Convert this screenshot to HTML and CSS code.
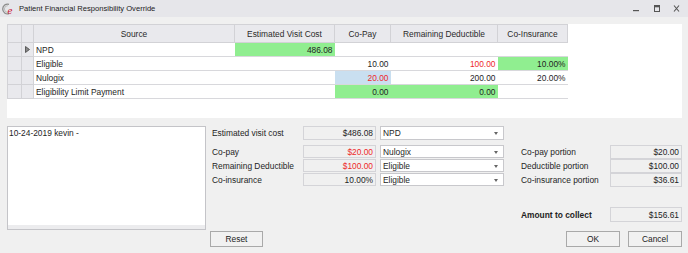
FILE: index.html
```html
<!DOCTYPE html>
<html>
<head>
<meta charset="utf-8">
<link rel="stylesheet" href="styles.css">
</head>
<body>
<div class="window">
  <div class="titlebar">
    <svg class="app-icon" width="14" height="12" viewBox="0 0 14 12">
      <path d="M7 1.3 A4.9 4.9 0 1 0 7 10.7" fill="none" stroke="#8c8c8c" stroke-width="1.3"/>
      <path d="M5.8 2.6 A3.4 3.4 0 1 0 5.8 9.4" fill="none" stroke="#b0b0b0" stroke-width="0.8"/>
      <text x="5.6" y="10.8" class="icon-e">e</text>
    </svg>
    <span class="title">Patient Financial Responsibility Override</span>
    <span class="spacer"></span>
    <svg class="ctrl" width="60" height="10" viewBox="0 0 60 10">
      <rect x="2" y="6" width="6" height="1.2" fill="#555"/>
      <rect x="23.5" y="1.5" width="5" height="6" fill="none" stroke="#555" stroke-width="1"/>
      <rect x="23.5" y="1.5" width="5" height="1.8" fill="#555"/>
      <path d="M43 1.5 L48 7.5 M48 1.5 L43 7.5" stroke="#555" stroke-width="1.1"/>
    </svg>
  </div>

  <div class="grid-panel">
    <table class="grid">
      <colgroup>
        <col class="c-rh1"><col class="c-rh2"><col class="c-src"><col class="c-evc"><col class="c-cp"><col class="c-rd"><col class="c-ci">
      </colgroup>
      <thead>
        <tr class="hrow">
          <th class="rh"></th><th class="rh"></th><th>Source</th><th>Estimated Visit Cost</th><th>Co-Pay</th><th>Remaining Deductible</th><th>Co-Insurance</th>
        </tr>
      </thead>
      <tbody>
        <tr>
          <td class="rh"></td>
          <td class="rh"><svg class="cur" width="5" height="7" viewBox="0 0 5 7"><path d="M0.5 0.5 L4.5 3.5 L0.5 6.5 Z" fill="#888" stroke="#444" stroke-width="0.8"/></svg></td>
          <td class="src">NPD</td><td class="num green">486.08</td><td class="num"></td><td class="num"></td><td class="num"></td>
        </tr>
        <tr>
          <td class="rh"></td><td class="rh"></td>
          <td class="src">Eligible</td><td class="num"></td><td class="num">10.00</td><td class="num red">100.00</td><td class="num green">10.00%</td>
        </tr>
        <tr>
          <td class="rh"></td><td class="rh"></td>
          <td class="src">Nulogix</td><td class="num"></td><td class="num blue red">20.00</td><td class="num">200.00</td><td class="num">20.00%</td>
        </tr>
        <tr>
          <td class="rh"></td><td class="rh"></td>
          <td class="src">Eligibility Limit Payment</td><td class="num"></td><td class="num green">0.00</td><td class="num green">0.00</td><td class="num"></td>
        </tr>
      </tbody>
    </table>
  </div>

  <div class="lower">
    <div class="notes">
      <div class="notes-text">10-24-2019 kevin -</div>
      <div class="notes-foot"></div>
    </div>

    <div class="middle">
      <div class="frow first">
        <span class="lbl">Estimated visit cost</span>
        <span class="box">$486.08</span>
        <span class="combo">NPD<i class="arrow"></i></span>
      </div>
      <div class="fgroup">
        <div class="frow">
          <span class="lbl">Co-pay</span>
          <span class="box red">$20.00</span>
          <span class="combo">Nulogix<i class="arrow"></i></span>
        </div>
        <div class="frow">
          <span class="lbl">Remaining Deductible</span>
          <span class="box red">$100.00</span>
          <span class="combo">Eligible<i class="arrow"></i></span>
        </div>
        <div class="frow">
          <span class="lbl">Co-insurance</span>
          <span class="box">10.00%</span>
          <span class="combo">Eligible<i class="arrow"></i></span>
        </div>
      </div>
      <div class="spacer"></div>
      <button class="btn reset">Reset</button>
    </div>

    <div class="right">
      <div class="rgroup">
        <div class="rrow"><span class="rlbl">Co-pay portion</span><span class="box rbox">$20.00</span></div>
        <div class="rrow"><span class="rlbl">Deductible portion</span><span class="box rbox">$100.00</span></div>
        <div class="rrow"><span class="rlbl">Co-insurance portion</span><span class="box rbox">$36.61</span></div>
      </div>
      <div class="rrow amount"><span class="rlbl bold">Amount to collect</span><span class="box rbox">$156.61</span></div>
      <div class="btns">
        <button class="btn">OK</button>
        <button class="btn">Cancel</button>
      </div>
    </div>
  </div>
</div>
</body>
</html>
```

FILE: styles.css
```css
html, body {
  margin: 0;
  padding: 0;
}
body {
  width: 688px;
  height: 253px;
  overflow: hidden;
  background: #f0f0f0;
  font-family: "Liberation Sans", Arial, sans-serif;
  font-size: 8.4px;
  color: #1e1e1e;
}
.window {
  display: flex;
  flex-direction: column;
  height: 253px;
}
.titlebar {
  height: 17px;
  display: flex;
  align-items: center;
  padding-left: 2px;
  background: #e6e6ea;
}
.app-icon { display: block; }
.icon-e {
  font-family: "DejaVu Serif", serif;
  font-style: italic;
  font-size: 8.5px;
  fill: #c8102e;
}
.title {
  margin-left: 3px;
  font-size: 7.6px;
  color: #222;
}
.spacer { flex: 1; }
.ctrl { display: block; margin-right: -3px; }

.grid-panel {
  margin: 7px 6px 0 7px;
  height: 94px;
  background: #fff;
}
.grid {
  border-collapse: collapse;
  table-layout: fixed;
  width: 560px;
}
.c-rh1 { width: 14px; }
.c-rh2 { width: 12px; }
.c-src { width: 201px; }
.c-evc { width: 100px; }
.c-cp { width: 56px; }
.c-rd { width: 107px; }
.c-ci { width: 70px; }
.grid th, .grid td {
  padding: 0 2px;
  white-space: nowrap;
  overflow: hidden;
}
.grid th {
  height: 17px;
  font-weight: normal;
  background: #e9e9ed;
  border: 1px solid #d2d2d6;
  text-align: center;
  color: #2a2a2a;
}
.grid td {
  height: 13px;
  border-bottom: 1px solid #d8d8dc;
  line-height: 12px;
}
.grid td.rh {
  background: #e9e9ed;
  border: 1px solid #d2d2d6;
  padding: 0;
}
.grid td.src { border-left: 1px solid #d2d2d6; }
.cur { display: block; margin: 0 auto; }
.num { text-align: right; }
.green { background: #90ee90; }
.blue { background: #c9dff0; }
.red { color: #ee2a2a; }

.lower {
  display: flex;
  margin-top: 8px;
  padding-left: 7px;
  height: 121px;
}
.notes {
  width: 199px;
  height: 104px;
  box-sizing: border-box;
  border: 1px solid #c4c4c8;
  display: flex;
  flex-direction: column;
}
.notes-text {
  flex: 1;
  background: #fff;
  padding: 1px 0 0 1px;
}
.notes-foot {
  height: 4px;
  background: #ececee;
}
.middle {
  margin-left: 4px;
  width: 294px;
  display: flex;
  flex-direction: column;
}
.frow {
  display: flex;
  align-items: center;
  height: 14px;
}
.fgroup {
  margin-top: 5px;
  display: flex;
  flex-direction: column;
  gap: 1px;
}
.fgroup .frow { height: 13px; }
.lbl {
  width: 91px;
  padding-left: 2px;
}
.box {
  box-sizing: border-box;
  height: 100%;
  display: flex;
  align-items: center;
  justify-content: flex-end;
  padding-right: 2px;
  background: #f0f0f0;
  border: 1px solid #d4d4d8;
}
.frow .box { width: 73px; }
.combo {
  position: relative;
  box-sizing: border-box;
  height: 100%;
  width: 124px;
  margin-left: 4px;
  display: flex;
  align-items: center;
  padding-left: 2px;
  background: #fff;
  border: 1px solid #c8c8cc;
}
.arrow {
  position: absolute;
  right: 5px;
  top: 50%;
  margin-top: -1px;
  border-left: 2.5px solid transparent;
  border-right: 2.5px solid transparent;
  border-top: 3px solid #666;
}
.btn {
  box-sizing: border-box;
  height: 16px;
  width: 54px;
  padding: 0;
  font-family: inherit;
  font-size: 8.4px;
  color: #222;
  background: #f1f1f1;
  border: 1px solid #a9a9a9;
  border-radius: 0;
}
.reset { width: 53px; }

.right {
  margin-left: 16px;
  width: 162px;
  display: flex;
  flex-direction: column;
}
.rgroup {
  margin-top: 19px;
  display: flex;
  flex-direction: column;
}
.rrow {
  display: flex;
  align-items: center;
  height: 14px;
}
.rlbl {
  width: 90px;
  padding-left: 1px;
}
.rbox { width: 72px; }
.bold { font-weight: bold; }
.amount {
  margin-top: 20px;
  height: 15px;
}
.btns {
  margin-top: 9px;
  display: flex;
  justify-content: flex-end;
  gap: 8px;
}
```
